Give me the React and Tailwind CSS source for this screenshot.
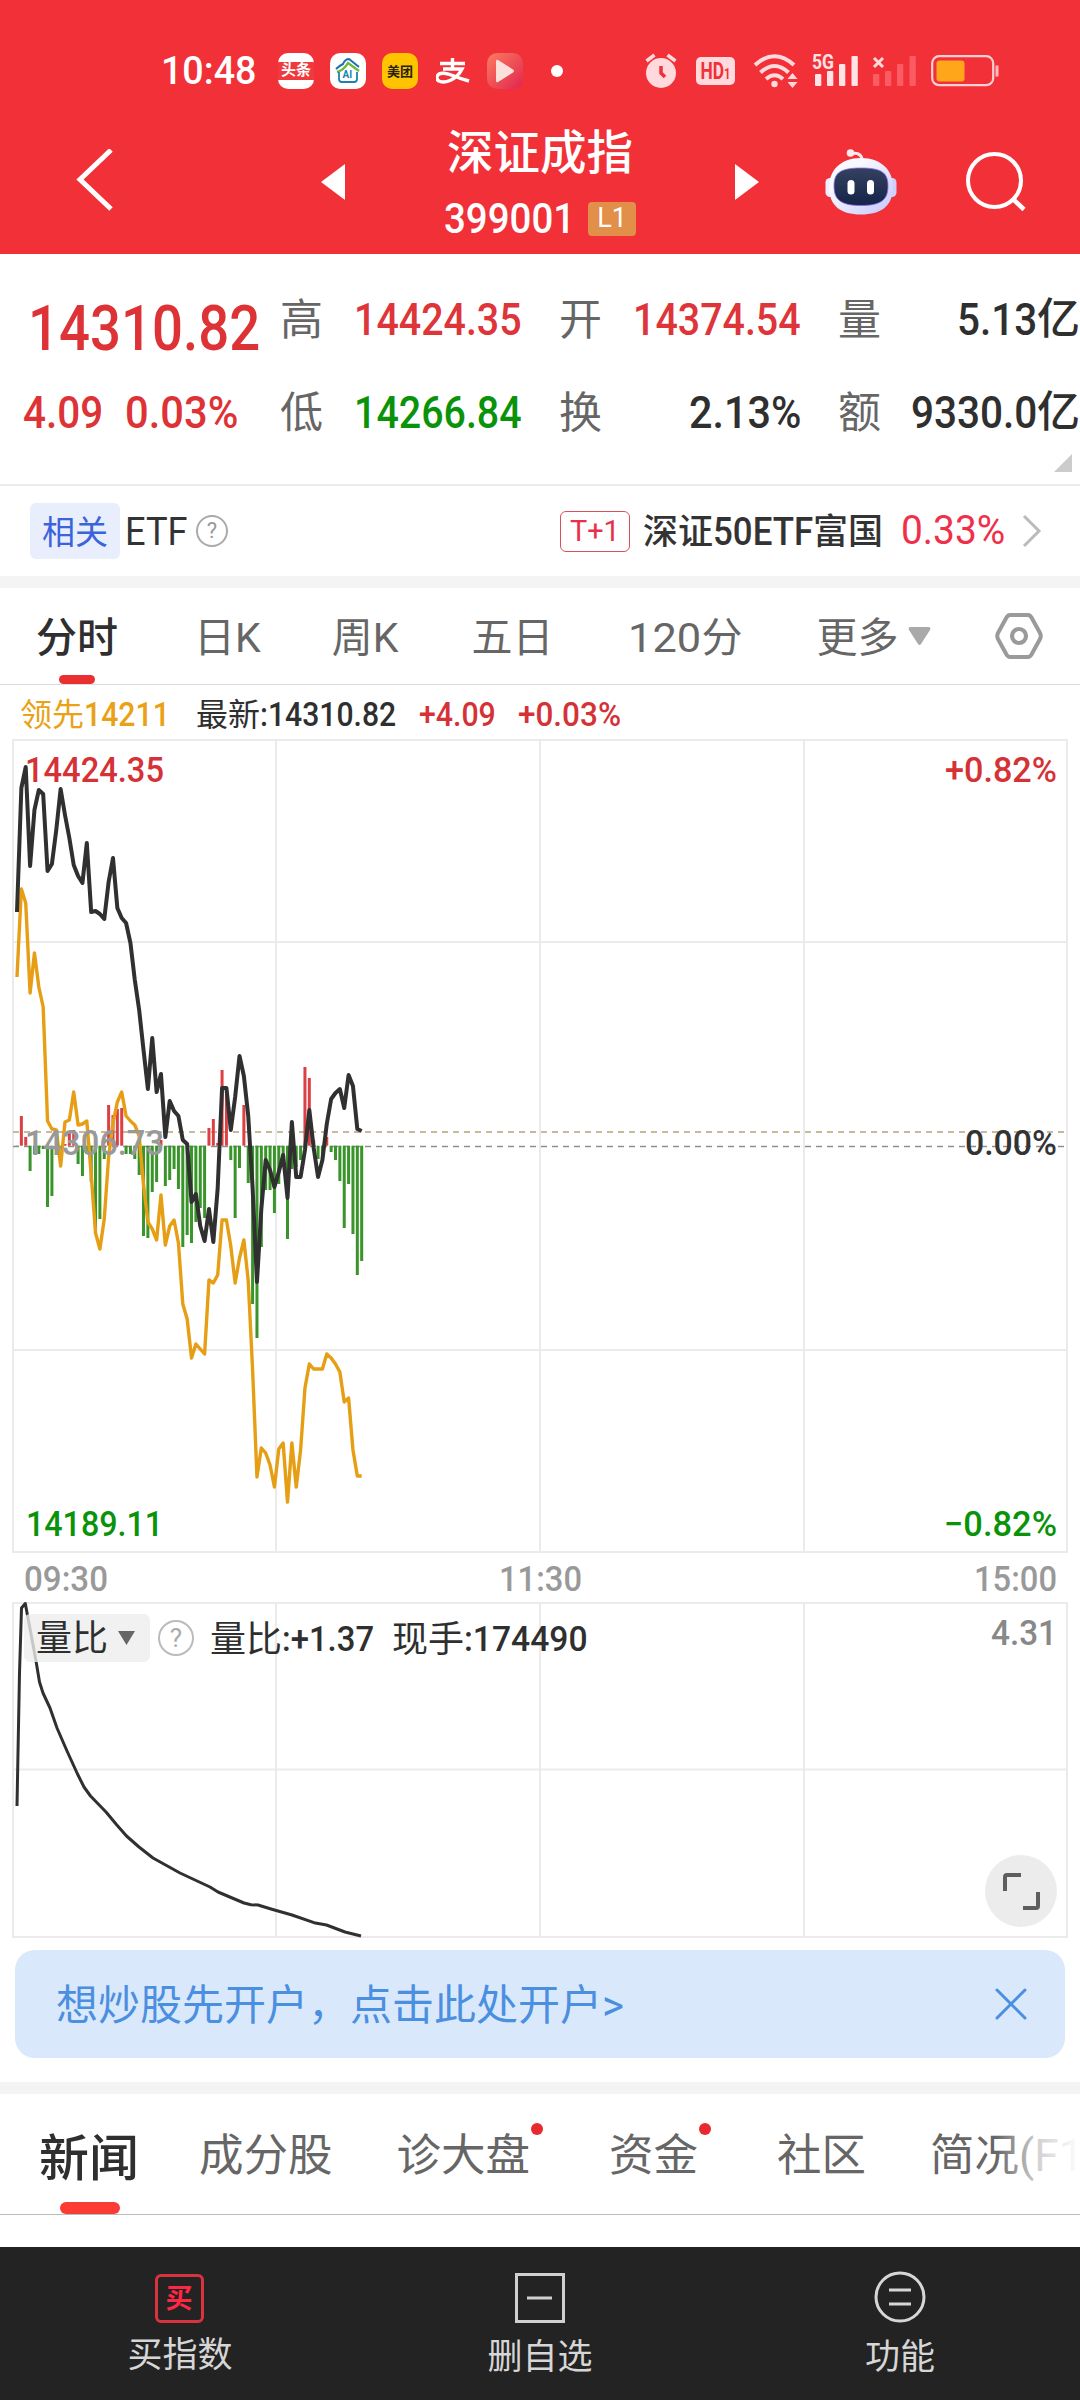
import { useLayoutEffect, useRef, useState } from "react";
import clsx from "clsx";

const PRICE = [
  912, 788, 767, 866, 810, 790, 794, 871, 864, 830, 789, 815, 838, 865, 876, 883, 843, 912, 911, 914,
  919, 882, 858, 908, 918, 923, 943, 980, 1010, 1050, 1089, 1038, 1092, 1074, 1137, 1101, 1111, 1116, 1140, 1144,
  1202, 1194, 1226, 1241, 1209, 1242, 1188, 1088, 1088, 1130, 1097, 1056, 1076, 1116, 1188, 1282, 1209, 1160, 1170, 1187,
  1172, 1155, 1198, 1122, 1177, 1177, 1150, 1110, 1148, 1177, 1160, 1124, 1099, 1093, 1089, 1108, 1075, 1086, 1129, 1131,
];

const LEAD = [
  977, 889, 903, 993, 953, 987, 1007, 1121, 1129, 1130, 1166, 1122, 1120, 1092, 1125, 1124, 1121, 1174, 1233, 1249,
  1219, 1157, 1123, 1102, 1092, 1116, 1121, 1125, 1136, 1185, 1222, 1229, 1240, 1195, 1245, 1226, 1220, 1243, 1304, 1319,
  1358, 1344, 1349, 1354, 1280, 1283, 1275, 1220, 1220, 1246, 1283, 1258, 1240, 1281, 1370, 1477, 1448, 1453, 1465, 1487,
  1449, 1443, 1502, 1443, 1487, 1450, 1388, 1364, 1369, 1369, 1369, 1354, 1358, 1364, 1372, 1402, 1398, 1450, 1476, 1476,
];

const BARS = [
  1146, 1116, 1137, 1171, 1154, 1154, 1149, 1207, 1196, 1149, 1149, 1144, 1133, 1130, 1164, 1176, 1154, 1182, 1233, 1219,
  1159, 1105, 1115, 1109, 1108, 1154, 1154, 1159, 1175, 1236, 1238, 1192, 1182, 1140, 1186, 1180, 1169, 1189, 1247, 1235,
  1243, 1222, 1208, 1218, 1128, 1119, 1143, 1070, 1092, 1160, 1218, 1168, 1105, 1183, 1304, 1338, 1247, 1190, 1190, 1213,
  1184, 1160, 1239, 1169, 1167, 1160, 1067, 1078, 1140, 1159, 1159, 1137, 1152, 1160, 1181, 1228, 1184, 1234, 1275, 1261,
];

const RATIO =
  "17,1806 19.5,1673 21.5,1608 25.3,1603.5 28,1618 36,1661 39.5,1682 43,1693 50,1708 57,1728 67,1751 77.5,1774 84,1787 90.5,1796 106,1812 116,1824 126.5,1836 139,1847 153,1858 180,1873 210,1887 218,1892 244,1903 251,1904.7 258,1905 271,1909 292,1915 314,1922.7 326.5,1925 345,1932 361,1936";

const ZERO = 1145.7;
const minuteX = (i) => 17 + i * 4.363;
const toPoints = (ys) => ys.map((y, i) => `${minuteX(i)},${y}`).join(" ");

// squeezes a run of text to a fixed width, for the narrow figures
function Fit({ w, className, children }) {
  const ref = useRef(null);
  const [scale, setScale] = useState(1);
  useLayoutEffect(() => {
    setScale(w / ref.current.offsetWidth);
  }, [w]);
  return (
    <span className={clsx("inline-block shrink-0", className)} style={{ width: w }}>
      <span
        ref={ref}
        className="inline-block origin-left whitespace-nowrap"
        style={{ transform: `scaleX(${scale})` }}
      >
        {children}
      </span>
    </span>
  );
}

function ChartText({ x, y, w, fill, end, children }) {
  return (
    <text
      x={end ? x - w : x}
      y={y}
      textLength={w}
      lengthAdjust="spacingAndGlyphs"
      fontSize="35"
      fontWeight="500"
      fill={fill}
    >
      {children}
    </text>
  );
}

function SignalBars({ className }) {
  return (
    <g className={className} fill="currentColor">
      <rect x="3" y="20" width="6.3" height="12" rx="1" />
      <rect x="15" y="17" width="6.3" height="15" rx="1" />
      <rect x="27" y="10" width="6.3" height="22" rx="1" />
      <rect x="39.5" y="2" width="6.3" height="30" rx="1" />
    </g>
  );
}

function StatusBar() {
  return (
    <div className="flex h-[110px] items-center pt-8 pl-[161px] text-white">
      <Fit w={95} className="text-[38px] font-medium">10:48</Fit>
      <div className="ml-[22px] flex h-9 w-9 flex-col justify-center overflow-hidden rounded-[10px] bg-white">
        <span className="bg-[#f0393c] pt-px pb-0.5 text-center text-[15px] leading-[20px] font-bold">头条</span>
      </div>
      <div className="ml-4 flex h-9 w-9 items-center justify-center rounded-[10px] bg-white">
        <svg width="26" height="28" viewBox="0 0 26 28" fill="none">
          <path d="M1 12 Q4 9 8 7 Q10 2 14 2 L24 10" stroke="#1c6fb5" strokeWidth="2" />
          <path d="M2 15 Q9 13 13 6 L24 14" stroke="#6fb93b" strokeWidth="2.4" />
          <path d="M4 15 V22 Q4 25 7 25 H19 Q22 25 22 22 V15" stroke="#1b82b4" strokeWidth="1.8" />
          <text x="7.5" y="21" fontSize="10" fontWeight="700" fill="#1b82b4">AI</text>
        </svg>
      </div>
      <div className="ml-4 flex h-9 w-9 items-center justify-center rounded-[10px] bg-[#ffc400] text-[13px] font-bold text-[#2a2210]">
        美团
      </div>
      <svg className="ml-[18px]" width="34" height="28" viewBox="0 0 34 28" fill="none" stroke="white">
        <path d="M4 6.5 H29 M16.5 1 V12 M7 12 H26 Q22 20 14 23.5 C6 27 0 24 1 19.5 C3 14 12 16.500 18 19 Q25 22 33 24" strokeWidth="3.4" />
      </svg>
      <div className="ml-[17px] flex h-9 w-9 items-center justify-center rounded-[10px] bg-linear-to-br from-[#fb7a62] via-[#ef4f55] to-[#e01f53]">
        <svg width="20" height="24" viewBox="0 0 20 24">
          <path d="M1 2 Q1 0 3 1 L18 10.500 Q20 12 18 13.500 L3 23 Q1 24 1 22 Z" fill="#fde0da" />
        </svg>
      </div>
      <span className="ml-7 h-3 w-3 rounded-full bg-white" />

      <svg className="ml-[82px]" width="32" height="36" viewBox="0 0 32 36" fill="none">
        <circle cx="16" cy="20" r="15" fill="#ffd9dc" />
        <path d="M1.500 8 L9.500 2 M22.500 2 L30.500 8" stroke="#ffd9dc" strokeWidth="3.500" />
        <path d="M16 13 V20 L20 24" stroke="#f23038" strokeWidth="3.500" />
      </svg>
      <svg className="ml-[19px]" width="39" height="28" viewBox="0 0 39 28">
        <rect width="39" height="28" rx="5" fill="#ffd9dc" />
        <text x="4.500" y="22" textLength="30" lengthAdjust="spacingAndGlyphs" fontSize="23" fontWeight="700" fill="#f23038">
          HD<tspan fontSize="15">1</tspan>
        </text>
      </svg>
      <svg className="ml-[18px]" width="46" height="34" viewBox="0 0 46 34" fill="none" stroke="#ffd9dc" strokeWidth="4">
        <path d="M2 11 Q21.500 -6.500 41 11" />
        <path d="M7.500 18.500 Q21.500 5.500 35.500 18.500" />
        <path d="M13 25 Q21.500 17.500 30 25" />
        <circle cx="21.500" cy="30" r="3.200" fill="#ffd9dc" stroke="none" />
        <path d="M34.500 25 L39.500 19 L44.500 25 Z M34.500 28 L39.500 34 L44.500 28 Z" fill="#ffd9dc" stroke="none" />
      </svg>
      <svg className="ml-[13px] overflow-visible text-[#ffe3e5]" width="47" height="34" viewBox="0 0 47 34">
        <SignalBars />
        <text x="0" y="15" textLength="22" lengthAdjust="spacingAndGlyphs" fontSize="21" fontWeight="700" fill="currentColor">5G</text>
      </svg>
      <svg className="ml-[11px]" width="47" height="34" viewBox="0 0 47 34">
        <SignalBars className="text-[#fb5b62]" />
        <path d="M4 4 L13 13 M13 4 L4 13" stroke="#ffd9dc" strokeWidth="3" />
      </svg>
      <svg className="ml-[14px]" width="68" height="32" viewBox="0 0 68 32">
        <rect x="1.200" y="1.200" width="61" height="29" rx="7" fill="none" stroke="#ffd0d3" strokeWidth="2.200" />
        <rect x="5.500" y="5.500" width="28" height="21" rx="3" fill="#ffa61a" />
        <rect x="64.500" y="10.500" width="3" height="11" fill="#ffb9bd" />
      </svg>
    </div>
  );
}

function Robot() {
  return (
    <svg className="ml-[66px]" width="72" height="66" viewBox="0 0 72 66" fill="none">
      <defs>
        <linearGradient id="shell" x1="0" y1="0" x2="1" y2="1">
          <stop offset="0.3" stopColor="#f8f8ff" />
          <stop offset="1" stopColor="#c3c6fb" />
        </linearGradient>
        <linearGradient id="visor" x1="0" y1="0" x2="0" y2="1">
          <stop offset="0" stopColor="#34415f" />
          <stop offset="1" stopColor="#16244a" />
        </linearGradient>
      </defs>
      <circle cx="25.500" cy="4" r="3.800" fill="#fbe9f0" />
      <path d="M27 4.500 Q36 3 37.500 11" stroke="#fbe9f0" strokeWidth="3" />
      <rect x="0.500" y="29" width="9" height="19" rx="4.500" fill="#eeeefe" />
      <rect x="62.500" y="29" width="9" height="19" rx="4.500" fill="#cfcffc" />
      <path d="M36 9 C57 9 68 22 68 38 C68 57 56 65.500 36 65.500 C16 65.500 4 57 4 38 C4 22 15 9 36 9 Z" fill="url(#shell)" />
      <path d="M36 19 C57 19 63 24 63 37 C63 51 56 56.500 36 56.500 C16 56.500 9 51 9 37 C9 24 15 19 36 19 Z" fill="url(#visor)" stroke="#8a6ee8" strokeWidth="0.800" />
      <rect x="22.500" y="31" width="7" height="14.500" rx="3.500" fill="white" />
      <rect x="42" y="31" width="7" height="14.500" rx="3.500" fill="white" />
    </svg>
  );
}

function TitleBar() {
  return (
    <div className="flex h-36 items-center text-white">
      <svg className="ml-[76px]" width="37" height="66" viewBox="0 0 37 66" fill="none">
        <path d="M35 1 L4 30.500 L35 60" stroke="white" strokeWidth="5" />
      </svg>
      <svg className="ml-[208px]" width="24" height="36" viewBox="0 0 24 36">
        <path d="M24 0 V36 L0 18 Z" fill="white" />
      </svg>
      <div className="ml-[98px] flex h-full w-[194px] flex-col items-center pt-5">
        <div className="text-[46.5px] font-medium whitespace-nowrap">深证成指</div>
        <div className="mt-[21px] flex items-center">
          <Fit w={131} className="text-[42px] font-medium">399001</Fit>
          <span className="ml-[13px] flex h-[34px] w-12 items-center justify-center rounded bg-[#e28f4a] text-[27px]">
            L1
          </span>
        </div>
      </div>
      <svg className="ml-[98px]" width="24" height="36" viewBox="0 0 24 36">
        <path d="M0 0 V36 L24 18 Z" fill="white" />
      </svg>
      <Robot />
      <svg className="ml-[68px]" width="64" height="64" viewBox="0 0 64 64" fill="none" stroke="white">
        <circle cx="29.500" cy="30.500" r="26.500" strokeWidth="4" />
        <path d="M48 49 L59 59.500" strokeWidth="4.500" />
      </svg>
    </div>
  );
}

const STATS = [
  { label: "高", value: "14424.35", w: 168, cls: "text-[#dd3539]" },
  { label: "开", value: "14374.54", w: 168, cls: "text-[#dd3539]" },
  { label: "量", value: "5.13", w: 80, unit: "亿", cls: "text-[#2f2f2f]" },
  { label: "低", value: "14266.84", w: 168, cls: "text-[#0a930a]" },
  { label: "换", value: "2.13%", w: 112, cls: "text-[#2f2f2f]" },
  { label: "额", value: "9330.0", w: 126, unit: "亿", cls: "text-[#2f2f2f]" },
];

function Quote() {
  return (
    <div className="flex h-[232px] border-b-2 border-[#ececec]">
      <div className="w-[280px] shrink-0 pt-[43px] font-medium text-[#dd3336]">
        <div className="flex pl-[28px]">
          <Fit w={232} className="text-[63px]">14310.82</Fit>
        </div>
        <div className="mt-[30px] flex gap-[22px] pl-[23px]">
          <Fit w={80} className="text-[45px]">4.09</Fit>
          <Fit w={113} className="text-[45px]">0.03%</Fit>
        </div>
      </div>
      <div className="relative grid grid-cols-[242px_242px_242px] content-start gap-x-[37px] gap-y-12 pt-11">
        {STATS.map((s) => (
          <div key={s.label} className="flex h-[45px] items-center justify-between">
            <span className="text-[43px] text-[#666]">{s.label}</span>
            <span className={clsx("flex items-center pb-[3px] text-[45px] font-medium", s.cls)}>
              <Fit w={s.w}>{s.value}</Fit>
              {s.unit && <span className="text-[43px]">{s.unit}</span>}
            </span>
          </div>
        ))}
        <svg className="absolute right-2 bottom-3" width="18" height="18" viewBox="0 0 18 18">
          <path d="M18 0 V18 H0 Z" fill="#ccc" />
        </svg>
      </div>
    </div>
  );
}

function EtfRow() {
  return (
    <div className="flex h-[102px] items-center border-b-[12px] border-[#f4f4f4] text-[#333]">
      <span className="ml-[30px] flex h-14 w-[90px] items-center justify-center rounded-md bg-[#e8eefc] pt-0.5 text-[33px] text-[#3b63dc]">
        相关
      </span>
      <Fit w={63} className="ml-[5px] pt-px text-[38px]">ETF</Fit>
      <span className="ml-[8px] flex h-8 w-8 items-center justify-center rounded-full border-2 border-[#aaa] text-[22px] text-[#999]">
        ?
      </span>
      <span className="ml-[332px] flex h-[41px] w-[70px] items-center justify-center rounded-md border border-[#d8505c] text-[#e8304a]">
        <Fit w={50} className="text-[30px]">T+1</Fit>
      </span>
      <span className="ml-[13px] flex items-center pt-0.5 text-[35px] font-medium">
        深证
        <Fit w={100} className="text-[38px]">50ETF</Fit>
        富国
      </span>
      <Fit w={104} className="ml-[18px] text-[40px] text-[#f0304a]">0.33%</Fit>
      <svg className="ml-[17px]" width="20" height="34" viewBox="0 0 20 34" fill="none">
        <path d="M2 2 L17 17 L2 32" stroke="#bbb" strokeWidth="3" />
      </svg>
    </div>
  );
}

function PeriodTabs() {
  return (
    <div className="flex h-[97px] border-b border-[#dcdcdc] pt-[30px] text-[41px] text-[#666]">
      <div className="ml-[35px] flex w-[84px] flex-col items-center">
        <span className="font-medium text-[#2f2f2f]">分时</span>
        <span className="mt-4 h-[9px] w-9 rounded-full bg-[#ea2f30]" />
      </div>
      <span className="ml-[75px]">日K</span>
      <span className="ml-[71px]">周K</span>
      <span className="ml-[73px]">五日</span>
      <span className="ml-[75px] flex">
        <Fit w={73}>120</Fit>分
      </span>
      <span className="ml-[74px]">更多</span>
      <svg className="mt-[9px] ml-2.5" width="23" height="19" viewBox="0 0 23 19">
        <path d="M2 0 H21 Q23 0.500 22 3 L13 17 Q11.500 19 10 17 L1 3 Q0 0.500 2 0 Z" fill="#a9a9a9" />
      </svg>
      <svg className="-mt-[5px] ml-[64px]" width="48" height="46" viewBox="0 0 48 46" fill="none" stroke="#9a9a9a">
        <path d="M15 2 H33 Q35 2 36.500 4.500 L45 20 Q46.500 23 45 26 L36.500 41.500 Q35 44 33 44 H15 Q13 44 11.500 41.500 L3 26 Q1.500 23 3 20 L11.500 4.500 Q13 2 15 2 Z" strokeWidth="4" />
        <circle cx="24" cy="23" r="7" strokeWidth="4.200" />
      </svg>
    </div>
  );
}

function MinuteChart() {
  return (
    <div className="text-[#2f2f2f]">
      <div className="flex h-[54px] items-center pt-[5px] pl-5 text-[32px]">
        <span className="flex items-center text-[#e9a115]">
          领先<Fit w={86} className="text-[33px] font-medium">14211</Fit>
        </span>
        <span className="ml-[26px] flex items-center">
          最新<Fit w={136} className="text-[33px] font-medium">:14310.82</Fit>
        </span>
        <Fit w={77} className="ml-[23px] text-[33px] font-medium text-[#d53237]">+4.09</Fit>
        <Fit w={103} className="ml-[22px] text-[33px] font-medium text-[#d53237]">+0.03%</Fit>
      </div>
      <svg className="block" width="1080" height="862" viewBox="0 739 1080 862">
        <g fill="none" stroke="#ebebeb" strokeWidth="2">
          <path d="M13 740 H1067 V1552 H13 Z M13 942 H1067 M13 1350 H1067 M276 740 V1552 M540 740 V1552 M804 740 V1552" />
        </g>
        <path d="M13 1132 H1067" stroke="#b5a27c" strokeWidth="1.500" strokeDasharray="6 5" />
        <path d="M13 1146.500 H1067" stroke="#8f8f8f" strokeWidth="1.500" strokeDasharray="6 5" />
        {BARS.map((y, i) => (
          <rect
            key={i}
            x={minuteX(i) - 1.5}
            y={Math.min(y, ZERO)}
            width="3"
            height={Math.abs(y - ZERO)}
            fill={y < ZERO ? "#db4144" : "#39942a"}
          />
        ))}
        <polyline points={toPoints(LEAD)} fill="none" stroke="#e69f14" strokeWidth="3.400" strokeLinejoin="round" />
        <polyline points={toPoints(PRICE)} fill="none" stroke="#303030" strokeWidth="4" strokeLinejoin="round" />
        <ChartText x={25} y={782} w={139} fill="#d53237">14424.35</ChartText>
        <ChartText x={25} y={1155} w={139} fill="#999">14306.73</ChartText>
        <ChartText x={26} y={1536} w={137} fill="#0a930a">14189.11</ChartText>
        <ChartText end x={1057} y={782} w={112} fill="#d53237">+0.82%</ChartText>
        <ChartText end x={1057} y={1155} w={92} fill="#333">0.00%</ChartText>
        <ChartText end x={1057} y={1536} w={113} fill="#0a930a">−0.82%</ChartText>
        <ChartText x={24} y={1591} w={84} fill="#999">09:30</ChartText>
        <ChartText x={499} y={1591} w={83} fill="#999">11:30</ChartText>
        <ChartText end x={1057} y={1591} w={83} fill="#999">15:00</ChartText>
      </svg>
    </div>
  );
}

function RatioChart() {
  return (
    <div className="relative h-[337px] text-[#2f2f2f]">
      <svg className="block" width="1080" height="337" viewBox="0 1601 1080 337">
        <path
          d="M13 1603 H1067 V1937 H13 Z M13 1769.500 H1067 M276 1603 V1937 M540 1603 V1937 M804 1603 V1937"
          fill="none"
          stroke="#ebebeb"
          strokeWidth="2"
        />
        <polyline points={RATIO} fill="none" stroke="#303030" strokeWidth="3" strokeLinejoin="round" />
        <ChartText end x={1057} y={1645} w={66} fill="#888">4.31</ChartText>
      </svg>
      <div className="absolute top-[13px] left-6 flex h-12 items-center text-[36px]">
        <span className="flex h-12 w-[126px] items-center rounded-md bg-[#ededed]/80 pt-0.5 pl-3">
          量比
          <svg className="mb-0.5 ml-[9px]" width="19" height="14" viewBox="0 0 19 14">
            <path d="M1 0 H18 L9.500 14 Z" fill="#666" />
          </svg>
        </span>
        <span className="ml-2 flex h-9 w-9 items-center justify-center rounded-full border-2 border-[#bbb] text-[26px] text-[#aaa]">
          ?
        </span>
        <span className="ml-4 flex items-center pt-[3px]">
          量比<Fit w={92} className="text-[35px] font-medium">:+1.37</Fit>
        </span>
        <span className="ml-[18px] flex items-center pt-[3px]">
          现手<Fit w={124} className="text-[35px] font-medium">:174490</Fit>
        </span>
      </div>
      <button className="absolute top-[254px] left-[985px] flex h-[72px] w-[72px] items-center justify-center rounded-full bg-[#ececec]">
        <svg width="37" height="37" viewBox="0 0 37 37" fill="none" stroke="#5e5e5e" strokeWidth="4">
          <path d="M2 18 V4 Q2 2 4 2 H18 M35 19 V33 Q35 35 33 35 H20" />
        </svg>
      </button>
    </div>
  );
}

function OpenAccountBanner() {
  return (
    <div className="mx-[15px] mt-3 flex h-[108px] items-center justify-between rounded-[20px] bg-[#dae8fb] pr-[38px] pl-[41px] text-[42px] text-[#4a8fe0]">
      <span className="pt-1 whitespace-nowrap">想炒股先开户，点击此处开户&gt;</span>
      <svg width="32" height="32" viewBox="0 0 32 32" fill="none">
        <path d="M2 2 L30 30 M30 2 L2 30" stroke="currentColor" strokeWidth="3" strokeLinecap="round" />
      </svg>
    </div>
  );
}

function NewsTab({ label, dot, className }) {
  return (
    <span className={clsx("relative shrink-0 whitespace-nowrap", className)}>
      {label}
      {dot && <span className="absolute -top-[11px] -right-[13px] h-3 w-3 rounded-full bg-[#e82a2e]" />}
    </span>
  );
}

function NewsTabs() {
  return (
    <div className="relative mt-6 flex h-[133px] overflow-hidden border-t-[12px] border-b border-[#f4f4f4] border-b-[#bbb] pt-10 text-[44.5px] text-[#666]">
      <div className="ml-[39px] flex shrink-0 flex-col items-center">
        <span className="text-[50px] font-medium text-[#2f2f2f]">新闻</span>
        <span className="mt-[18px] ml-0.5 h-3 w-[60px] rounded-full bg-[#fb3b35]" />
      </div>
      <NewsTab className="ml-[60px]" label="成分股" />
      <NewsTab className="ml-[64px]" label="诊大盘" dot />
      <NewsTab className="ml-[79px]" label="资金" dot />
      <NewsTab className="ml-[79px]" label="社区" />
      <NewsTab className="ml-[64px]" label="简况(F10)" />
      <span className="absolute top-0 right-0 h-[110px] w-[84px] bg-linear-to-r from-white/0 via-white/70 to-white" />
    </div>
  );
}

function BottomBar() {
  return (
    <div className="mt-8 grid h-[153px] grid-cols-3 bg-[#232323] pt-6 text-[35px] text-[#d6d6d6]">
      <div className="flex flex-col items-center">
        <span className="mt-[3px] mr-0.5 flex h-[49px] w-[49px] items-center justify-center rounded-md border-3 border-[#d8333f] pt-0.5 text-[27px] font-bold text-[#ff2744]">
          买
        </span>
        <span className="mt-[15px]">买指数</span>
      </div>
      <div className="flex flex-col items-center">
        <svg className="mt-0.5" width="50" height="50" viewBox="0 0 50 50" fill="none" stroke="#d0d0d0" strokeWidth="3">
          <path d="M1.500 1.500 H48.500 V48.500 H1.500 Z M12 25 H37" />
        </svg>
        <span className="mt-[17px]">删自选</span>
      </div>
      <div className="flex flex-col items-center">
        <svg width="52" height="52" viewBox="0 0 52 52" fill="none" stroke="#d6d6d6">
          <circle cx="26" cy="26" r="24" strokeWidth="3" />
          <path d="M15 19 H37 M15 33 H37" strokeWidth="3" />
        </svg>
        <span className="mt-[17px]">功能</span>
      </div>
    </div>
  );
}

export default function App() {
  return (
    <div className="h-[2400px] w-[1080px] overflow-hidden bg-white font-[Roboto,'Noto_Sans_CJK_SC',sans-serif] leading-none [&_*]:leading-none">
      <header className="bg-[#f23038]">
        <StatusBar />
        <TitleBar />
      </header>
      <Quote />
      <EtfRow />
      <PeriodTabs />
      <MinuteChart />
      <RatioChart />
      <OpenAccountBanner />
      <NewsTabs />
      <BottomBar />
    </div>
  );
}
